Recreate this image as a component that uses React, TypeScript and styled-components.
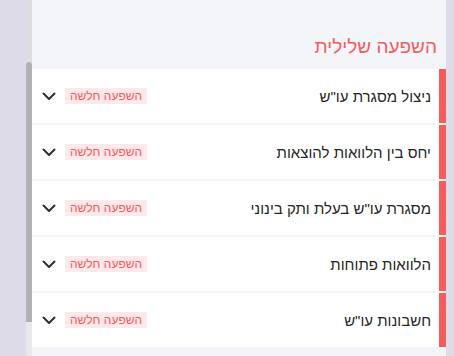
import React from 'react';
import styled, { createGlobalStyle } from 'styled-components';

const GlobalStyle = createGlobalStyle`
  html, body { margin: 0; padding: 0; }
  body {
    background: #dddbe8;
    font-family: "Liberation Sans", "DejaVu Sans", sans-serif;
    overflow: hidden;
  }
`;

const Page = styled.div`
  display: flex;
  width: 454px;
  height: 356px;
  padding-left: 26px;
  box-sizing: border-box;
`;

const ScrollTrack = styled.div`
  width: 6px;
  height: 356px;
  display: flex;
  flex-direction: column;
  background: #e8e8e8;
`;

const TrackTop = styled.div`
  height: 62px;
  background: #dedede;
`;

const Thumb = styled.div`
  height: 260px;
  background: #b1b1b1;
  border-radius: 3px 3px 0 0;
`;

const Panel = styled.div`
  width: 414px;
  height: 356px;
  background: #f4f5f9;
  direction: rtl;
  display: flex;
  flex-direction: column;
`;

const Title = styled.h2`
  margin: 0;
  padding: 36px 9px 0 0;
  height: 33px;
  font-size: 19px;
  line-height: 22px;
  font-weight: 400;
  color: #f65b5b;
`;

const List = styled.div`
  display: flex;
  flex-direction: column;
  gap: 2px;
`;

const Row = styled.div`
  display: flex;
  align-items: center;
  height: 54px;
  background: #fff;
  border-right: 7px solid #f65b5b;
  padding: 0 8px 0 10px;
`;

const RowLabel = styled.span`
  flex: 1;
  font-size: 15px;
  color: #262626;
`;

const Badge = styled.span`
  background: #fde8ea;
  color: #f4585c;
  font-size: 12px;
  line-height: 16px;
  padding: 0 5px;
  margin-left: 9px;
`;

const Chevron = () => (
  <svg width="14" height="9" viewBox="0 0 14 9" fill="none">
    <path d="M1.5 1.5 L7 7 L12.5 1.5" stroke="#2f2f35" strokeWidth="2" strokeLinecap="round" strokeLinejoin="round" />
  </svg>
);

const items = [
  'ניצול מסגרת עו"ש',
  'יחס בין הלוואות להוצאות',
  'מסגרת עו"ש בעלת ותק בינוני',
  'הלוואות פתוחות',
  'חשבונות עו"ש',
];

export default function App() {
  return (
    <>
      <GlobalStyle />
      <Page>
        <ScrollTrack>
          <TrackTop />
          <Thumb />
        </ScrollTrack>
        <Panel>
          <Title>השפעה שלילית</Title>
          <List>
            {items.map((item) => (
              <Row key={item}>
                <RowLabel>{item}</RowLabel>
                <Badge>השפעה חלשה</Badge>
                <Chevron />
              </Row>
            ))}
          </List>
        </Panel>
      </Page>
    </>
  );
}
